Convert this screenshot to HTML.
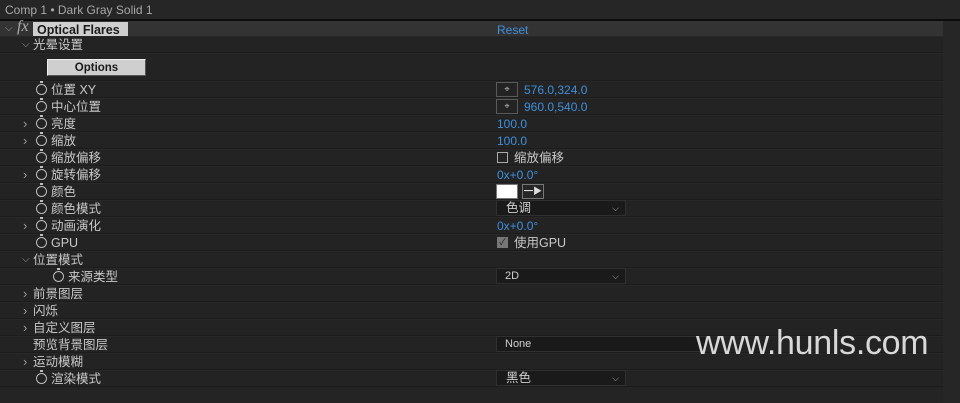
<!DOCTYPE html>
<html><head><meta charset="utf-8"><style>
*{margin:0;padding:0;box-sizing:border-box}
body{width:960px;height:403px;background:#232323;position:relative;overflow:hidden;font-family:"Liberation Sans","Noto Sans CJK SC",sans-serif;font-size:12px;color:#c4c4c4}
.a{position:absolute;white-space:nowrap}
.row{position:absolute;left:0;width:943px;height:17px;border-bottom:1px solid #1c1c1c;border-top:1px solid #282828}
.t{position:absolute;line-height:19px;font-size:12.5px;color:#c8c8c8}
.v{position:absolute;line-height:19px;color:#3f8fdc;font-size:12px}
.sw{position:absolute;width:11px;height:11px;border:1.5px solid #bdbdbd;border-radius:50%}
.sw:after{content:"";position:absolute;left:2.5px;top:-4px;width:3px;height:2px;background:#bdbdbd}
.ch{position:absolute;font-size:13px;color:#999;line-height:18px}
.dd{position:absolute;left:496px;width:130px;height:16px;background:#1a1a1a;border:1px solid #303030;line-height:15px;padding-left:8px;font-size:11px;color:#cfcfcf}
.dd b{position:absolute;right:6px;top:0;font-weight:normal;color:#aaa;font-size:9px}
</style></head><body>
<div class="a" style="left:0;top:0;width:960px;height:19px;background:#262626"></div>
<div class="a" style="left:5px;top:3px;font-size:12px;color:#a8a8a8">Comp 1 • Dark Gray Solid 1</div>
<div class="a" style="left:0;top:19px;width:960px;height:2px;background:#0c0c0c"></div>
<div class="a" style="left:943px;top:21px;width:17px;height:382px;background:#262626"></div>
<div class="a" style="left:0;top:21px;width:943px;height:16px;background:#333"></div>
<div class="a" style="left:5px;top:21px;font-size:10px;color:#999;line-height:16px">⌵</div>
<div class="a" style="left:17px;top:18px;font-size:16px;font-style:italic;color:#aaa;font-family:'Liberation Serif',serif">fx</div>
<div class="a" style="left:33px;top:22px;width:95px;height:14px;background:#cfcfcf"></div>
<div class="a" style="left:37px;top:22px;font-weight:bold;color:#1a1a1a;line-height:16px;font-size:12.5px">Optical Flares</div>
<div class="a" style="left:497px;top:22px;color:#3f8fdc;line-height:16px">Reset</div>

<div class="row" style="top:36px"></div>
<div class="ch" style="left:22px;top:36px;font-size:10px">⌵</div><div class="t" style="left:33px;top:36px">光晕设置</div>
<div class="row" style="top:53px;height:28px"></div>
<div class="a" style="left:47px;top:59px;width:99px;height:17px;background:#cfcfcf;border:1px solid #eee;border-bottom-color:#555;border-right-color:#555;text-align:center;font-weight:bold;color:#1a1a1a;font-size:11.5px;line-height:16px">Options</div>

<div class="row" style="top:81px"></div><div class="sw" style="left:36px;top:84px"></div><div class="t" style="left:51px;top:81px">位置 XY</div>
<div class="a" style="left:496px;top:82px;width:22px;height:15px;border:1px solid #5a5a5a;color:#bbb;font-size:9px;text-align:center;line-height:13px">⌖</div><div class="v" style="left:524px;top:81px">576.0,324.0</div>
<div class="row" style="top:98px"></div><div class="sw" style="left:36px;top:101px"></div><div class="t" style="left:51px;top:98px">中心位置</div>
<div class="a" style="left:496px;top:99px;width:22px;height:15px;border:1px solid #5a5a5a;color:#bbb;font-size:9px;text-align:center;line-height:13px">⌖</div><div class="v" style="left:524px;top:98px">960.0,540.0</div>
<div class="row" style="top:115px"></div><div class="ch" style="left:23px;top:115px">›</div><div class="sw" style="left:36px;top:118px"></div><div class="t" style="left:51px;top:115px">亮度</div><div class="v" style="left:497px;top:115px">100.0</div>
<div class="row" style="top:132px"></div><div class="ch" style="left:23px;top:132px">›</div><div class="sw" style="left:36px;top:135px"></div><div class="t" style="left:51px;top:132px">缩放</div><div class="v" style="left:497px;top:132px">100.0</div>
<div class="row" style="top:149px"></div><div class="sw" style="left:36px;top:152px"></div><div class="t" style="left:51px;top:149px">缩放偏移</div>
<div class="a" style="left:497px;top:152px;width:11px;height:11px;border:1.5px solid #aaa"></div><div class="t" style="left:514px;top:149px">缩放偏移</div>
<div class="row" style="top:166px"></div><div class="ch" style="left:23px;top:166px">›</div><div class="sw" style="left:36px;top:169px"></div><div class="t" style="left:51px;top:166px">旋转偏移</div><div class="v" style="left:497px;top:166px">0x+0.0°</div>
<div class="row" style="top:183px"></div><div class="sw" style="left:36px;top:186px"></div><div class="t" style="left:51px;top:183px">颜色</div>
<div class="a" style="left:496px;top:184px;width:22px;height:15px;background:#fff;border:1px solid #777"></div>
<div class="a" style="left:522px;top:184px;width:22px;height:15px;border:1px solid #777;background:#262626;color:#ddd;font-size:9px;line-height:13px;text-align:center">━▶</div>
<div class="row" style="top:200px"></div><div class="sw" style="left:36px;top:203px"></div><div class="t" style="left:51px;top:200px">颜色模式</div>
<div class="dd" style="top:200px;font-size:12.5px;padding-left:9px">色调<b>⌵</b></div>
<div class="row" style="top:217px"></div><div class="ch" style="left:23px;top:217px">›</div><div class="sw" style="left:36px;top:220px"></div><div class="t" style="left:51px;top:217px">动画演化</div><div class="v" style="left:497px;top:217px">0x+0.0°</div>
<div class="row" style="top:234px"></div><div class="sw" style="left:36px;top:237px"></div><div class="t" style="left:51px;top:234px">GPU</div>
<div class="a" style="left:497px;top:237px;width:11px;height:11px;background:#777;color:#222;font-size:9px;line-height:11px;text-align:center">✓</div><div class="t" style="left:514px;top:234px">使用GPU</div>
<div class="row" style="top:251px"></div><div class="ch" style="left:22px;top:251px;font-size:10px">⌵</div><div class="t" style="left:33px;top:251px">位置模式</div>
<div class="row" style="top:268px"></div><div class="sw" style="left:53px;top:271px"></div><div class="t" style="left:68px;top:268px">来源类型</div>
<div class="dd" style="top:268px">2D<b>⌵</b></div>
<div class="row" style="top:285px"></div><div class="ch" style="left:23px;top:285px">›</div><div class="t" style="left:33px;top:285px">前景图层</div>
<div class="row" style="top:302px"></div><div class="ch" style="left:23px;top:302px">›</div><div class="t" style="left:33px;top:302px">闪烁</div>
<div class="row" style="top:319px"></div><div class="ch" style="left:23px;top:319px">›</div><div class="t" style="left:33px;top:319px">自定义图层</div>
<div class="row" style="top:336px"></div><div class="t" style="left:33px;top:336px">预览背景图层</div>
<div class="dd" style="top:336px;width:210px">None</div>
<div class="row" style="top:353px"></div><div class="ch" style="left:23px;top:353px">›</div><div class="t" style="left:33px;top:353px">运动模糊</div>
<div class="row" style="top:370px"></div><div class="sw" style="left:36px;top:373px"></div><div class="t" style="left:51px;top:370px">渲染模式</div>
<div class="dd" style="top:370px;font-size:12.5px;padding-left:9px">黑色<b>⌵</b></div>
<div class="a" style="left:0;top:388px;width:943px;height:15px;background:#242424"></div>
<div class="a" style="left:696px;top:324px;font-size:34px;color:#d8d8d8;letter-spacing:-0.3px">www.hunls.com</div>
</body></html>
